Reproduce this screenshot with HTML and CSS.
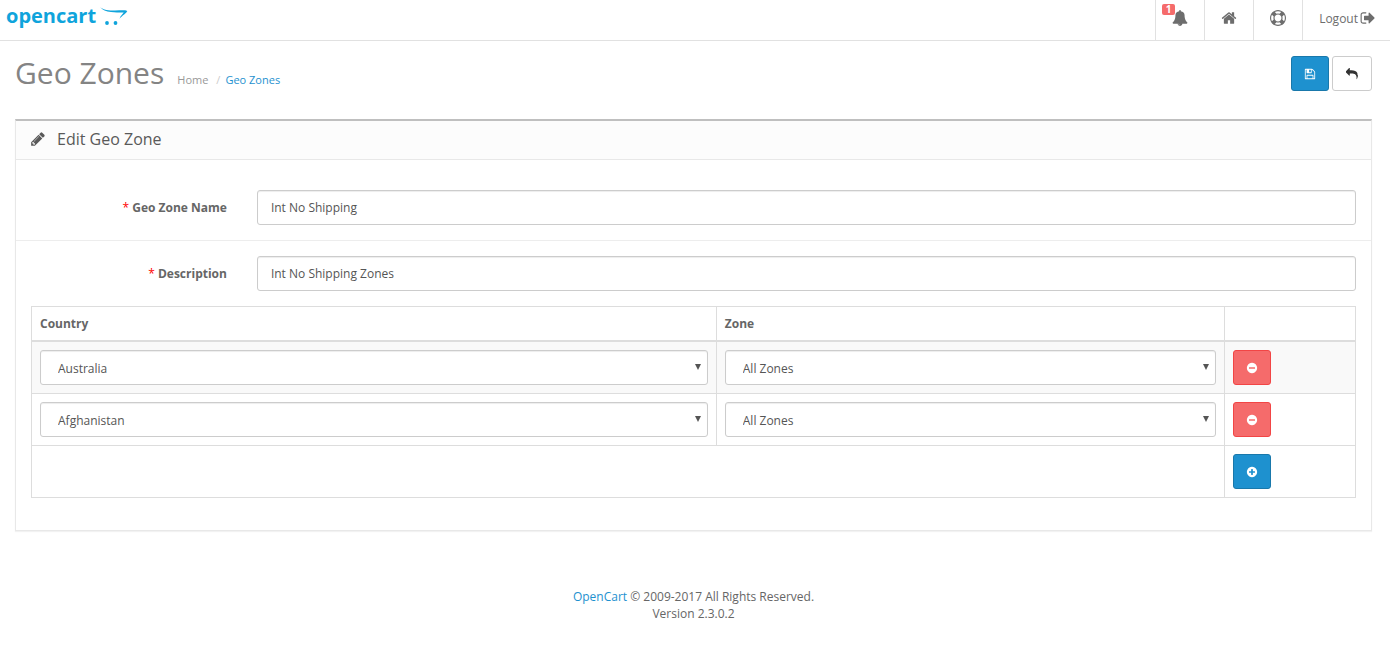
FILE: index.html
```html
<!DOCTYPE html>
<html lang="en">
<head>
  <meta charset="UTF-8" />
  <meta name="viewport" content="width=device-width, initial-scale=1" />
  <title>Geo Zones</title>
  <link rel="stylesheet" href="styles.css">
</head>
<body>
  <header id="header">
    <a href="#" class="logo">
      <span>opencart</span>
      <svg width="28" height="20" viewBox="0 0 28 20" fill="currentColor" aria-hidden="true">
        <path d="M0 0C3 3 9 3.600 15 3.600C20 3.600 24.500 2.900 27.300 3.900C26.500 6.200 22.500 8 19.500 11.800C20.500 8.500 23 7 23.700 5.600C20 5.200 16 5.900 11 5.100C6 4.400 2.500 3.200 0 0Z"/>
        <circle cx="7" cy="16" r="1.900"/>
        <circle cx="15.500" cy="16" r="1.900"/>
      </svg>
    </a>
    <nav class="nav">
      <a href="#" class="alerts" aria-label="Alerts">
        <span class="badge">1</span>
        <svg class="icon icon-lg" viewBox="0 0 1792 1792"><path d="M912 1696q0-16-16-16-59 0-101.500-42.500t-42.500-101.500q0-16-16-16t-16 16q0 73 51.500 124.500t124.500 51.500q16 0 16-16zm816-288q0 52-38 90t-90 38h-448q0 106-75 181t-181 75-181-75-75-181h-448q-52 0-90-38t-38-90q50-42 91-88t85-119.500 74.500-158.500 50-206 19.500-260q0-152 117-282.500t307-158.500q-8-19-8-39 0-40 28-68t68-28 68 28 28 68q0 20-8 39 190 28 307 158.500t117 282.500q0 139 19.500 260t50 206 74.500 158.500 85 119.500 91 88z"/></svg>
      </a>
      <a href="#" aria-label="Store">
        <svg class="icon icon-lg" viewBox="0 0 1792 1792"><path d="M1472 992v480q0 26-19 45t-45 19h-384v-384h-256v384h-384q-26 0-45-19t-19-45v-480q0-1 .5-3t.5-3l575-474 575 474q1 2 1 6zm223-69l-62 74q-8 9-21 11h-3q-13 0-21-7l-692-577-692 577q-12 8-24 7-13-2-21-11l-62-74q-8-10-7-23.500t11-21.500l719-599q32-26 76-26t76 26l244 204v-195q0-14 9-23t23-9h192q14 0 23 9t9 23v408l219 182q10 8 11 21.500t-7 23.500z"/></svg>
      </a>
      <a href="#" aria-label="Help">
        <svg class="icon icon-lg" viewBox="0 0 1792 1792"><path d="M896 0q182 0 348 71t286 191 191 286 71 348-71 348-191 286-286 191-348 71-348-71-286-191-191-286-71-348 71-348 191-286 286-191 348-71zm0 128q-190 0-361 90l194 194q82-28 167-28t167 28l194-194q-171-90-361-90zm-678 1129l194-194q-28-82-28-167t28-167l-194-194q-90 171-90 361t90 361zm678 407q190 0 361-90l-194-194q-82 28-167 28t-167-28l-194 194q171 90 361 90zm0-384q159 0 271.500-112.500t112.500-271.500-112.500-271.500-271.500-112.500-271.500 112.500-112.500 271.500 112.500 271.500 271.500 112.500zm484-217l194 194q90-171 90-361t-90-361l-194 194q28 82 28 167t-28 167z"/></svg>
      </a>
      <a href="#" class="logout">
        Logout
        <svg class="icon icon-lg" viewBox="0 0 1792 1792"><path d="M704 1440q0 4 1 20t.5 26.500-3 23.500-10 19.500-20.500 6.500h-320q-119 0-203.500-84.500t-84.500-203.500v-704q0-119 84.500-203.500t203.500-84.500h320q13 0 22.500 9.500t9.500 22.500q0 4 1 20t.5 26.500-3 23.500-10 19.500-20.500 6.500h-320q-66 0-113 47t-47 113v704q0 66 47 113t113 47h312l11.500 1 11.500 3 8 5.500 7 9 2 13.500zm928-544q0 26-19 45l-544 544q-19 19-45 19t-45-19-19-45v-288h-448q-26 0-45-19t-19-45v-384q0-26 19-45t45-19h448v-288q0-26 19-45t45-19 45 19l544 544q19 19 19 45z"/></svg>
      </a>
    </nav>
  </header>

  <main id="content">
    <div class="page-header">
      <h1>Geo Zones</h1>
      <ul class="breadcrumb">
        <li><a href="#">Home</a></li>
        <li><a href="#" class="current">Geo Zones</a></li>
      </ul>
      <div class="actions">
        <button type="submit" form="form-geo-zone" class="btn btn-primary" aria-label="Save">
          <svg class="icon" viewBox="0 0 1792 1792"><path d="M512 1536h768v-384h-768v384zm896 0h128v-896q0-14-10-38.500t-20-34.500l-281-281q-10-10-34-20t-39-10v416q0 40-28 68t-68 28h-576q-40 0-68-28t-28-68v-416h-128v1280h128v-416q0-40 28-68t68-28h832q40 0 68 28t28 68v416zm-384-928v-320q0-13-9.500-22.500t-22.500-9.500h-192q-13 0-22.500 9.500t-9.500 22.500v320q0 13 9.500 22.500t22.500 9.500h192q13 0 22.500-9.500t9.500-22.500zm640 32v928q0 40-28 68t-68 28h-1344q-40 0-68-28t-28-68v-1344q0-40 28-68t68-28h928q40 0 88 20t76 48l280 280q28 28 48 76t20 88z"/></svg>
        </button>
        <a href="#" class="btn btn-default" aria-label="Cancel">
          <svg class="icon" viewBox="0 0 1792 1792"><path d="M1792 1120q0 166-127 451-3 7-10.500 24t-13.500 30-13 22q-12 17-28 17-15 0-23.500-10t-8.500-25q0-9 2.500-26.500t2.500-23.500q5-68 5-123 0-112-19.500-200.500t-54-153.500-89-112-117-78.500-146-49-166.500-24-192-7.500h-224v256q0 26-19 45t-45 19-45-19l-512-512q-19-19-19-45t19-45l512-512q19-19 45-19t45 19 19 45v256h224q713 0 875 403 53 134 53 333z"/></svg>
        </a>
      </div>
    </div>

    <section class="panel">
      <div class="panel-heading">
        <svg class="icon icon-lg" viewBox="0 0 1792 1792"><path d="M491 1536l91-91-235-235-91 91v107h128v128h107zm523-928q0-22-22-22-10 0-17 7l-542 542q-7 7-7 17 0 22 22 22 10 0 17-7l542-542q7-7 7-17zm-54-192l416 416-832 832h-416v-416zm683 96q0 53-37 90l-166 166-416-416 166-165q36-38 90-38 53 0 91 38l235 234q37 39 37 91z"/></svg>
        <h2>Edit Geo Zone</h2>
      </div>
      <form id="form-geo-zone" class="panel-body">
        <div class="form-group">
          <label for="input-name">Geo Zone Name</label>
          <input type="text" id="input-name" name="name" class="form-control" value="Int No Shipping" />
        </div>
        <div class="form-group">
          <label for="input-description">Description</label>
          <input type="text" id="input-description" name="description" class="form-control" value="Int No Shipping Zones" />
        </div>

        <table class="table">
          <thead>
            <tr>
              <th class="col-country">Country</th>
              <th class="col-zone">Zone</th>
              <th></th>
            </tr>
          </thead>
          <tbody>
            <tr>
              <td>
                <div class="select">
                  <select name="country0" class="form-control" aria-label="Country"><option>Australia</option></select>
                </div>
              </td>
              <td>
                <div class="select">
                  <select name="zone0" class="form-control" aria-label="Zone"><option>All Zones</option></select>
                </div>
              </td>
              <td>
                <button type="button" class="btn btn-danger" aria-label="Remove">
                  <svg class="icon" viewBox="0 0 1792 1792"><path d="M1344 960v-128q0-26-19-45t-45-19h-768q-26 0-45 19t-19 45v128q0 26 19 45t45 19h768q26 0 45-19t19-45zm320-64q0 209-103 385.500t-279.500 279.500-385.500 103-385.500-103-279.500-279.500-103-385.500 103-385.500 279.500-279.500 385.500-103 385.500 103 279.500 279.500 103 385.500z"/></svg>
                </button>
              </td>
            </tr>
            <tr>
              <td>
                <div class="select">
                  <select name="country1" class="form-control" aria-label="Country"><option>Afghanistan</option></select>
                </div>
              </td>
              <td>
                <div class="select">
                  <select name="zone1" class="form-control" aria-label="Zone"><option>All Zones</option></select>
                </div>
              </td>
              <td>
                <button type="button" class="btn btn-danger" aria-label="Remove">
                  <svg class="icon" viewBox="0 0 1792 1792"><path d="M1344 960v-128q0-26-19-45t-45-19h-768q-26 0-45 19t-19 45v128q0 26 19 45t45 19h768q26 0 45-19t19-45zm320-64q0 209-103 385.500t-279.500 279.500-385.500 103-385.500-103-279.500-279.500-103-385.500 103-385.500 279.500-279.500 385.500-103 385.500 103 279.500 279.500 103 385.500z"/></svg>
                </button>
              </td>
            </tr>
          </tbody>
          <tfoot>
            <tr>
              <td colspan="2"></td>
              <td>
                <button type="button" class="btn btn-primary" aria-label="Add Geo Zone">
                  <svg class="icon" viewBox="0 0 1792 1792"><path d="M1344 960v-128q0-26-19-45t-45-19h-256v-256q0-26-19-45t-45-19h-128q-26 0-45 19t-19 45v256h-256q-26 0-45 19t-19 45v128q0 26 19 45t45 19h256v256q0 26 19 45t45 19h128q26 0 45-19t19-45v-256h256q26 0 45-19t19-45zm320-64q0 209-103 385.500t-279.500 279.500-385.500 103-385.500-103-279.500-279.500-103-385.500 103-385.500 279.500-279.500 385.500-103 385.500 103 279.500 279.500 103 385.500z"/></svg>
                </button>
              </td>
            </tr>
          </tfoot>
        </table>
      </form>
    </section>
  </main>

  <footer id="footer">
    <a href="#">OpenCart</a> © 2009-2017 All Rights Reserved.<br>
    Version 2.3.0.2
  </footer>
</body>
</html>
```
FILE: styles.css
```css
* {
  box-sizing: border-box;
}

body {
  margin: 0;
  font-family: "Open Sans", sans-serif;
  font-size: 12px;
  line-height: 17px;
  color: #666;
  background: #fff;
}

a {
  color: #1e91cf;
  text-decoration: none;
}

.icon {
  display: block;
  width: 12px;
  height: 12px;
  fill: currentColor;
}

.icon-lg {
  width: 16px;
  height: 16px;
}

/* Header */
#header {
  display: flex;
  justify-content: space-between;
  height: 41px;
  border-bottom: 1px solid #e1e1e1;
}

.logo {
  display: flex;
  align-items: flex-start;
  gap: 4px;
  padding: 7px 6px;
  color: #0fa4dc;
  font-size: 20px;
  font-weight: 700;
  line-height: 18px;
}

.nav {
  display: flex;
}

.nav a {
  display: flex;
  align-items: center;
  gap: 2px;
  padding: 0 16px 4px;
  border-left: 1px solid #e1e1e1;
  color: #6d6d6d;
}

.nav .alerts {
  position: relative;
}

.badge {
  position: absolute;
  top: 4px;
  left: 6px;
  width: 13px;
  border-radius: 2px;
  background: #f56b6b;
  color: #fff;
  font-size: 10px;
  font-weight: 700;
  line-height: 11px;
  text-align: center;
}

.nav .logout {
  padding-right: 14px;
}

/* Title row */
#content {
  padding: 15px 18px 0 15px;
}

.page-header {
  display: flex;
  align-items: flex-start;
  margin-bottom: 28px;
}

h1 {
  margin: 0;
  color: #848484;
  font-size: 30px;
  font-weight: 400;
  line-height: 33px;
}

.breadcrumb {
  display: flex;
  margin: 0;
  padding: 15px 13px 0;
  list-style: none;
  font-size: 11px;
}

.breadcrumb a {
  color: #999;
}

.breadcrumb .current {
  color: #1e91cf;
}

.breadcrumb li + li::before {
  content: "/";
  padding: 0 5px 0 8px;
  color: #ccc;
}

.actions {
  display: flex;
  gap: 3px;
  margin-left: auto;
}

.btn {
  display: flex;
  align-items: center;
  justify-content: center;
  width: 38px;
  height: 35px;
  padding: 0;
  border: 1px solid #ccc;
  border-radius: 3px;
  cursor: pointer;
}

.btn-primary {
  background: #1e91cf;
  border-color: #1978ab;
  color: #fff;
}

.btn-default {
  width: 40px;
  background: #fff;
  color: #333;
}

.btn-danger {
  background: #f56b6b;
  border-color: #f24545;
  color: #fff;
}

/* Panel */
.panel {
  border: 1px solid #e8e8e8;
  border-top: 2px solid #bfbfbf;
  box-shadow: 0 1px 1px rgba(0, 0, 0, 0.05);
}

.panel-heading {
  display: flex;
  align-items: center;
  gap: 11px;
  height: 39px;
  padding: 0 14px 2px;
  border-bottom: 1px solid #e8e8e8;
  background: #fcfcfc;
  color: #595959;
}

h2 {
  margin: 0;
  font-size: 16px;
  font-weight: 400;
  line-height: 18px;
}

.panel-body {
  padding: 15px 15px 32px;
}

.form-group {
  display: flex;
  align-items: center;
  margin: 0 -15px;
  padding: 15px;
}

.form-group + .form-group {
  border-top: 1px solid #ededed;
}

.form-group label {
  flex: none;
  width: 17.05%;
  padding-right: 30px;
  font-weight: 700;
  text-align: right;
}

.form-group label::before {
  content: "* ";
  color: #f00;
  font-weight: 400;
}

.form-control {
  display: block;
  width: 100%;
  height: 35px;
  padding: 8px 13px;
  border: 1px solid #ccc;
  border-radius: 3px;
  background: #fff;
  box-shadow: inset 0 1px 1px rgba(0, 0, 0, 0.075);
  color: #555;
  font-family: inherit;
  font-size: 12px;
  line-height: 17px;
}

.select {
  position: relative;
}

.select select {
  appearance: none;
  padding: 9px 17px 7px;
}

.select::after {
  content: "";
  position: absolute;
  top: 14px;
  right: 7px;
  border: 3px solid transparent;
  border-top: 6px solid #555;
  border-bottom: 0;
  pointer-events: none;
}

.table {
  width: 100%;
  table-layout: fixed;
  border-collapse: collapse;
}

.table th,
.table td {
  padding: 8px;
  border: 1px solid #ddd;
  text-align: left;
}

.table th {
  border-bottom-width: 2px;
}

.table tbody tr:nth-child(odd) {
  background: #f9f9f9;
}

.col-country {
  width: 51.72%;
}

.col-zone {
  width: 38.35%;
}

/* Footer */
#footer {
  padding: 57px 18px 20px 15px;
  text-align: center;
}
```
